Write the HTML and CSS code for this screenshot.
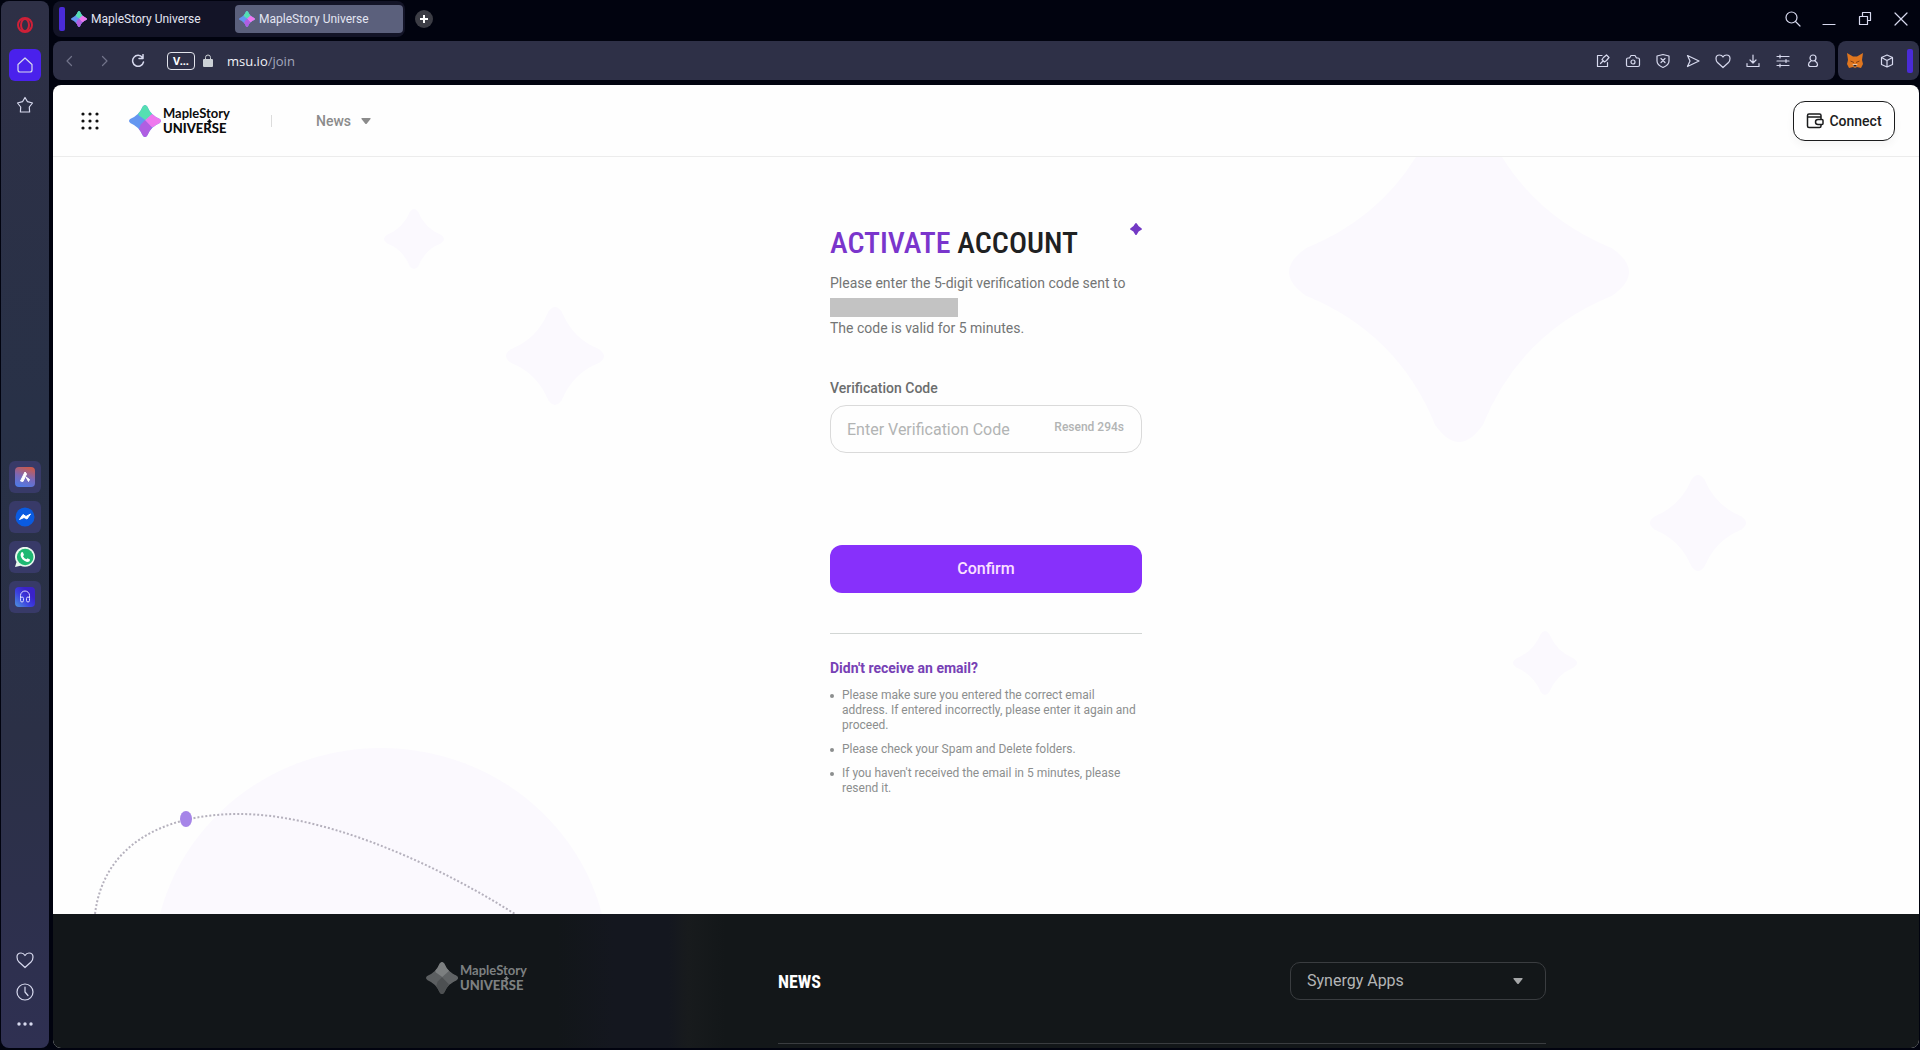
FILE: index.html
```html
<!DOCTYPE html>
<html lang="en">
<head>
    <meta charset="UTF-8">
    <meta name="viewport" content="width=device-width, initial-scale=1.0">
    <title>MapleStory Universe</title>
    <link rel="stylesheet" href="styles.css">
</head>
<body>
    <!-- shared shapes -->
    <svg class="defs" width="0" height="0" aria-hidden="true">
        <symbol id="star" viewBox="0 0 100 100">
            <path d="M43 5Q50 -5 57 5Q68 32 95 43Q105 50 95 57Q68 68 57 95Q50 105 43 95Q32 68 5 57Q-5 50 5 43Q32 32 43 5Z"/>
        </symbol>
        <clipPath id="star-clip">
            <path d="M43 5Q50 -5 57 5Q68 32 95 43Q105 50 95 57Q68 68 57 95Q50 105 43 95Q32 68 5 57Q-5 50 5 43Q32 32 43 5Z"/>
        </clipPath>
        <symbol id="logo-color" viewBox="0 0 100 100">
            <g clip-path="url(#star-clip)">
                <rect width="100" height="100" fill="#6496f0"/>
                <path d="M25 0H80L70 34L52 48L30 32Z" fill="#55dfb2"/>
                <path d="M70 30L100 20V75L68 68L50 48Z" fill="#ee78ee"/>
                <path d="M50 48L70 68L80 100H25L36 62Z" fill="#b05ee2"/>
            </g>
        </symbol>
        <symbol id="logo-gray" viewBox="0 0 100 100">
            <g clip-path="url(#star-clip)">
                <rect width="100" height="100" fill="#5c5f61"/>
                <path d="M25 0H80L70 34L52 48L30 32Z" fill="#7c7f80"/>
                <path d="M70 30L100 20V75L68 68L50 48Z" fill="#606365"/>
                <path d="M50 48L70 68L80 100H25L36 62Z" fill="#4d5052"/>
            </g>
        </symbol>
    </svg>

    <nav class="sidebar">
        <div class="side-group">
            <button class="side-btn" aria-label="Opera">
                <svg width="18" height="18" viewBox="0 0 18 18" fill="none" stroke="#cf2038"><circle cx="9" cy="9" r="7" stroke-width="2"/><ellipse cx="9" cy="9" rx="4" ry="6" stroke-width="2"/></svg>
            </button>
            <button class="side-btn home" aria-label="Home">
                <svg class="line" width="18" height="18" viewBox="0 0 18 18"><path d="M2 8.500L9 2L16 8.500V14Q16 16 14 16H4Q2 16 2 14Z"/></svg>
            </button>
            <button class="side-btn" aria-label="Bookmarks">
                <svg class="line" width="18" height="18" viewBox="0 0 18 18"><path d="M9 1.500L11.500 5.700L16.500 7L13.300 11L13.600 16H4.400L4.700 11L1.500 7L6.500 5.700Z"/></svg>
            </button>
        </div>
        <div class="side-group apps">
            <button class="side-btn app" aria-label="Aria">
                <svg width="20" height="20" viewBox="0 0 20 20">
                    <defs><linearGradient id="aria" x1="0.600" y1="0" x2="0.300" y2="1"><stop offset="0" stop-color="#c75a50"/><stop offset="0.500" stop-color="#7a68b8"/><stop offset="1" stop-color="#4f7ae6"/></linearGradient></defs>
                    <rect width="20" height="20" rx="4" fill="url(#aria)"/>
                    <path d="M5.500 14L10 5L11.500 7L8 14.500ZM11 10L14.500 12.500L13.500 14.500Z" fill="#fff" stroke="#fff" stroke-linejoin="round"/>
                </svg>
            </button>
            <button class="side-btn app" aria-label="Messenger">
                <svg width="20" height="20" viewBox="0 0 20 20"><circle cx="10" cy="10" r="9.500" fill="#0a5be0"/><path d="M4.500 12.500L8 7.500L11 9.500L15.500 7L12 12L9 10.500Z" fill="#fff" stroke="#fff" stroke-linejoin="round"/></svg>
            </button>
            <button class="side-btn app" aria-label="WhatsApp">
                <svg width="20" height="20" viewBox="0 0 20 20"><path d="M0 20L1.500 15A10 10 0 1 1 5.500 18.700Z" fill="#e8f8ee"/><circle cx="10.200" cy="10" r="8.300" fill="#1fb873"/><path d="M6 6Q7 4.500 8 5.500L9 8L8 9.200Q9.200 11.500 11.500 12.300L12.500 11.200L15 12.500Q15 15 12 15Q6 13 5.500 8Z" fill="#fff"/></svg>
            </button>
            <button class="side-btn app" aria-label="Player">
                <svg width="20" height="20" viewBox="0 0 20 20">
                    <defs><linearGradient id="player" x1="0" y1="1" x2="0.700" y2="0.300"><stop offset="0" stop-color="#4f95dd"/><stop offset="0.600" stop-color="#3b3fe0"/><stop offset="1" stop-color="#3a22c9"/></linearGradient></defs>
                    <rect width="20" height="20" rx="4" fill="url(#player)"/>
                    <path d="M5.500 11V8.500A4.500 4.500 0 0 1 14.500 8.500V11" fill="none" stroke="#d9d8ff"/>
                    <rect x="5.500" y="10" width="3" height="5" rx="1.500" fill="none" stroke="#d9d8ff"/>
                    <rect x="11.500" y="10" width="3" height="5" rx="1.500" fill="none" stroke="#d9d8ff"/>
                </svg>
            </button>
        </div>
        <div class="side-group bottom">
            <button class="side-btn" aria-label="Favorites">
                <svg class="line" width="18" height="18" viewBox="0 0 18 18"><path d="M9 16.500L3 11Q1 9 1 6Q1 2 5 2Q7.500 2 9 4.500Q10.500 2 13 2Q17 2 17 6Q17 9 15 11Z"/></svg>
            </button>
            <button class="side-btn" aria-label="History">
                <svg class="line" width="18" height="18" viewBox="0 0 18 18"><circle cx="9" cy="9" r="8"/><path d="M9 4V9L12 12.500"/></svg>
            </button>
            <button class="side-btn" aria-label="More">
                <svg width="18" height="18" viewBox="0 0 18 18" fill="#d7d9ee"><circle cx="3" cy="9" r="1.700"/><circle cx="9" cy="9" r="1.700"/><circle cx="15" cy="9" r="1.700"/></svg>
            </button>
        </div>
    </nav>

    <div class="window">
        <div class="tabbar">
            <div class="tabs">
                <span class="island"></span>
                <a class="tab" href="#"><svg width="16" height="16"><use href="#logo-color"/></svg>MapleStory Universe</a>
                <a class="tab active" href="#"><svg width="16" height="16"><use href="#logo-color"/></svg>MapleStory Universe</a>
            </div>
            <button class="new-tab" aria-label="New tab"><svg width="8" height="8" viewBox="0 0 8 8"><path d="M4 0V8M0 4H8" stroke="#fff" stroke-width="2"/></svg></button>
            <div class="win-controls">
                <button aria-label="Search"><svg class="line" width="16" height="16" viewBox="0 0 16 16"><circle cx="6.500" cy="6.500" r="5.500"/><path d="M10.500 10.500L15 15"/></svg></button>
                <button aria-label="Minimize"><svg class="line" width="16" height="16" viewBox="0 0 16 16"><path d="M2 13.500H14"/></svg></button>
                <button aria-label="Restore"><svg class="line" width="16" height="16" viewBox="0 0 16 16"><path d="M2.500 5.500H10.500V13.500H2.500ZM5.500 5.500V1.500H13.500V9.500H10.500"/></svg></button>
                <button aria-label="Close"><svg class="line" width="16" height="16" viewBox="0 0 16 16"><path d="M2 2L14 14M14 2L2 14"/></svg></button>
            </div>
        </div>

        <div class="toolbar">
            <div class="address">
                <button class="nav-btn off" aria-label="Back"><svg class="line" width="14" height="14" viewBox="0 0 14 14"><path d="M8.500 2.500L4 7L8.500 11.500"/></svg></button>
                <button class="nav-btn off" aria-label="Forward"><svg class="line" width="14" height="14" viewBox="0 0 14 14"><path d="M5.500 2.500L10 7L5.500 11.500"/></svg></button>
                <button class="nav-btn" aria-label="Reload"><svg class="line bold" width="14" height="14" viewBox="0 0 14 14"><path d="M11.500 3.500A5.500 5.500 0 1 0 12.500 8M12 0.500V4.500H8"/></svg></button>
                <button class="vpn">V...</button>
                <svg class="lock" width="10" height="14" viewBox="0 0 10 14"><path d="M2.500 6V3.500A2.500 2.500 0 0 1 7.500 3.500V6" fill="none" stroke="#ccd1d6"/><rect y="5" width="10" height="8" rx="1" fill="#ccd1d6"/></svg>
                <span class="url">msu.io<span>/join</span></span>
                <div class="tools">
                    <button aria-label="Edit page"><svg class="line" width="16" height="16" viewBox="0 0 16 16"><path d="M7 2.500H2.500V13.500H12.500V9.500M5.500 10.500L8 8M7 6.500L9.500 9L11.500 7.500L14 4.500L11.500 2L8.500 4.500Z"/></svg></button>
                    <button aria-label="Snapshot"><svg class="line" width="16" height="16" viewBox="0 0 16 16"><path d="M3 5H4.500L6 2.500H10L11.500 5H13Q14.500 5 14.500 6.500V12Q14.500 13.500 13 13.500H3Q1.500 13.500 1.500 12V6.500Q1.500 5 3 5Z"/><circle cx="8" cy="9" r="2"/></svg></button>
                    <button aria-label="Ad blocker"><svg class="line" width="16" height="16" viewBox="0 0 16 16"><path d="M8 1.500L14 3V8Q14 12 8 14.500Q2 12 2 8V3ZM6 5.500L10 9.500M10 5.500L6 9.500"/></svg></button>
                    <button aria-label="Send"><svg class="line" width="16" height="16" viewBox="0 0 16 16"><path d="M2.500 2.500L14 8L2.500 13.500L5 8Z"/></svg></button>
                    <button aria-label="Add to favorites"><svg class="line" width="16" height="16" viewBox="0 0 16 16"><path d="M8 14.500L2.500 9.500Q1 8 1 5.500Q1 2 4.500 2Q7 2 8 4Q9 2 11.500 2Q15 2 15 5.500Q15 8 13.500 9.500Z"/></svg></button>
                    <button aria-label="Downloads"><svg class="line" width="16" height="16" viewBox="0 0 16 16"><path d="M8 2V10M5 7L8 10L11 7M2 10.500V13.500H14V10.500"/></svg></button>
                    <button aria-label="Easy setup"><svg class="line" width="16" height="16" viewBox="0 0 16 16"><path d="M2 3.500H14M2 8H14M2 12.500H14M5 2V5M11 6.500V9.500M5 11V14"/></svg></button>
                    <button aria-label="Profile"><svg class="line" width="16" height="16" viewBox="0 0 16 16"><circle cx="8" cy="5" r="3"/><path d="M6 8Q3.500 9.500 3.500 11.500Q3.500 13.500 5.500 13.500H10.500Q12.500 13.500 12.500 11.500Q12.500 9.500 10 8"/></svg></button>
                </div>
            </div>
            <div class="extensions">
                <button aria-label="MetaMask"><svg width="16" height="16" viewBox="0 0 16 16"><path d="M0 0L6 3.500H10L16 0L15 7L16 11L14 15L10 14L8 15L6 14L2 15L0 11L1 7Z" fill="#e0761f"/><path d="M3.500 8L7 9.500M12.500 8L9 9.500" stroke="#7a3b17"/><path d="M5.500 11H10.500L9.500 13.500H6.500Z" fill="#e5c4ab"/><path d="M6.500 12H9.500V13.500H6.500Z" fill="#30201b"/></svg></button>
                <button aria-label="Extensions"><svg class="line" width="16" height="16" viewBox="0 0 16 16"><path d="M8 2L13.500 4.500V11.500L8 14L2.500 11.500V4.500ZM2.500 4.500L8 7.500L13.500 4.500M8 7.500V14"/></svg></button>
                <span class="island"></span>
            </div>
        </div>

        <div class="page">
            <header class="header">
                <button class="menu" aria-label="Menu">
                    <svg width="18" height="18" viewBox="0 0 18 18" fill="#111"><circle cx="2" cy="2" r="1.600"/><circle cx="9" cy="2" r="1.600"/><circle cx="16" cy="2" r="1.600"/><circle cx="2" cy="9" r="1.600"/><circle cx="9" cy="9" r="1.600"/><circle cx="16" cy="9" r="1.600"/><circle cx="2" cy="16" r="1.600"/><circle cx="9" cy="16" r="1.600"/><circle cx="16" cy="16" r="1.600"/></svg>
                </button>
                <a class="logo" href="#">
                    <svg width="32" height="32"><use href="#logo-color"/></svg>
                    <span class="logo-text"><span>MapleStory</span><b>UNIVERSE</b><svg class="spark" width="5" height="5"><use href="#star"/></svg></span>
                </a>
                <span class="divider"></span>
                <button class="news">News <svg width="10" height="6" viewBox="0 0 10 6"><path d="M1 0H9Q10 0 9.500 1L5.500 6H4.500L0.500 1Q0 0 1 0Z" fill="#8b8b8b"/></svg></button>
                <button class="connect">
                    <svg width="18" height="18" viewBox="0 0 18 18" fill="none" stroke="#1b1c1d" stroke-width="1.500"><path d="M15 7V3.500Q15 2 13.500 2H3Q1.500 2 1.500 3.500V14Q1.500 15.500 3 15.500H13.500Q15 15.500 15 14V12.500M1.500 5H15M16 7.500H12A2.500 2.500 0 0 0 12 12.500H16Q17 12.500 17 11.500V8.500Q17 7.500 16 7.500Z"/></svg>
                    Connect
                </button>
            </header>

            <main class="main">
                <div class="shapes" aria-hidden="true">
                    <svg class="shape s1"><use href="#star"/></svg>
                    <svg class="shape s2"><use href="#star"/></svg>
                    <svg class="shape s3"><use href="#star"/></svg>
                    <svg class="shape s4"><use href="#star"/></svg>
                    <svg class="shape s5"><use href="#star"/></svg>
                    <svg class="orbit" width="560" height="170" viewBox="0 0 560 170">
                        <ellipse cx="328" cy="224" rx="228" ry="220" fill="#fbf9fe"/>
                        <path d="M42 170C50 104 106 70 186 70C264 70 368 111 462 170" fill="none" stroke="#b5b1bd" stroke-width="2" stroke-dasharray="2 2"/>
                        <ellipse cx="133" cy="75" rx="6" ry="8" fill="#a685e8"/>
                    </svg>
                </div>

                <form class="form">
                    <svg class="sparkle" width="12" height="12"><use href="#star"/></svg>
                    <h1><em>ACTIVATE</em> ACCOUNT</h1>
                    <p class="intro">Please enter the 5-digit verification code sent to<span class="masked"></span>The code is valid for 5 minutes.</p>
                    <label for="code">Verification Code</label>
                    <div class="field">
                        <input type="text" id="code" placeholder="Enter Verification Code">
                        <button type="button" class="resend">Resend 294s</button>
                    </div>
                    <button type="button" class="confirm">Confirm</button>
                    <section class="help">
                        <h2>Didn't receive an email?</h2>
                        <ul>
                            <li>Please make sure you entered the correct email address. If entered incorrectly, please enter it again and proceed.</li>
                            <li>Please check your Spam and Delete folders.</li>
                            <li>If you haven't received the email in 5 minutes, please resend it.</li>
                        </ul>
                    </section>
                </form>
            </main>

            <footer class="footer">
                <a class="logo gray" href="#">
                    <svg width="32" height="32"><use href="#logo-gray"/></svg>
                    <span class="logo-text"><span>MapleStory</span><b>UNIVERSE</b><svg class="spark" width="5" height="5"><use href="#star"/></svg></span>
                </a>
                <div class="footer-main">
                    <h2>NEWS</h2>
                    <div class="select-wrap">
                        <select aria-label="Synergy Apps"><option>Synergy Apps</option></select>
                        <svg width="10" height="6" viewBox="0 0 10 6"><path d="M1 0H9Q10 0 9.500 1L5.500 6H4.500L0.500 1Q0 0 1 0Z" fill="#a5a7a8"/></svg>
                    </div>
                </div>
            </footer>
        </div>
    </div>
</body>
</html>
```
FILE: styles.css
```css
* {
    box-sizing: border-box;
}
body {
    margin: 0;
    height: 100vh;
    display: flex;
    gap: 4px;
    padding: 1px 1px 2px;
    overflow: hidden;
    background-color: #01030f;
    font-family: Roboto, "Liberation Sans", sans-serif;
}
button {
    padding: 0;
    border: none;
    background: none;
    font-family: inherit;
    cursor: pointer;
}
a {
    color: inherit;
    text-decoration: none;
}
svg {
    display: block;
    flex-shrink: 0;
}
.defs {
    position: absolute;
}
.line {
    fill: none;
    stroke: #d7d9ee;
    stroke-width: 1.2;
    stroke-linecap: round;
    stroke-linejoin: round;
}
.line.bold {
    stroke-width: 1.5;
}

/* browser side panel */
.sidebar {
    width: 48px;
    flex-shrink: 0;
    padding: 8px 0;
    display: flex;
    flex-direction: column;
    background: linear-gradient(#2e3046, #283147 40%, #2b3046 70%, #2f3052);
    border-radius: 8px;
}
.side-group {
    flex: 1;
    display: flex;
    flex-direction: column;
    align-items: center;
    gap: 8px;
}
.side-group.apps {
    justify-content: center;
    padding-top: 24px;
}
.side-group.bottom {
    justify-content: flex-end;
    gap: 0;
}
.side-btn {
    width: 32px;
    height: 32px;
    display: flex;
    align-items: center;
    justify-content: center;
    border-radius: 6px;
}
.side-btn.home {
    background-color: #4a21ec;
}
.side-btn.app {
    background-color: #383a68;
}

/* browser top */
.window {
    flex: 1;
    min-width: 0;
    display: flex;
    flex-direction: column;
}
.tabbar {
    height: 40px;
    flex-shrink: 0;
    display: flex;
    align-items: center;
    padding-bottom: 4px;
}
.tabs {
    height: 36px;
    display: flex;
    align-items: center;
    padding: 0 2px 0 6px;
    background-color: #131427;
    border-radius: 8px;
}
.island {
    width: 6px;
    height: 24px;
    background-color: #4a2bd8;
    border-radius: 2px;
}
.tab {
    width: 170px;
    height: 28px;
    display: flex;
    align-items: center;
    gap: 4px;
    padding-left: 6px;
    border-radius: 4px;
    color: #e3e5f2;
    font-size: 12px;
}
.tab.active {
    width: 168px;
    padding-left: 4px;
    background-color: #5b607c;
}
.new-tab {
    width: 18px;
    height: 18px;
    margin-left: 10px;
    display: flex;
    align-items: center;
    justify-content: center;
    background-color: #3c3d45;
    border-radius: 50%;
}
.win-controls {
    margin-left: auto;
    padding-right: 10px;
    display: flex;
    gap: 20px;
}
.toolbar {
    height: 39px;
    flex-shrink: 0;
    display: flex;
    gap: 3px;
}
.address,
.extensions {
    display: flex;
    align-items: center;
    background-color: #2e3047;
    border-radius: 8px;
}
.address {
    flex: 1;
    padding: 0 14px 0 10px;
}
.nav-btn {
    margin-right: 22px;
}
.nav-btn.off {
    opacity: 0.4;
    margin-right: 20px;
}
.vpn {
    width: 28px;
    height: 18px;
    border: 1px solid #e2e4ec;
    border-radius: 4px;
    color: #fff;
    font: bold 11px "Noto Sans", sans-serif;
    line-height: 14px;
}
.lock {
    margin: 0 14px 0 8px;
}
.url {
    color: #f2f3f8;
    font: 13px "Open Sans", "Noto Sans", sans-serif;
}
.url span {
    color: #a5a8bd;
}
.tools {
    margin-left: auto;
    display: flex;
    gap: 14px;
}
.extensions {
    width: 81px;
    padding: 0 5px 0 9px;
    gap: 16px;
}
.extensions .island {
    margin-left: -4px;
}

/* page */
.page {
    flex: 1;
    min-height: 0;
    margin-top: 5px;
    display: flex;
    flex-direction: column;
    overflow: hidden;
    background-color: #fefefe;
    border-radius: 8px;
}
.header {
    height: 72px;
    flex-shrink: 0;
    display: flex;
    align-items: center;
    padding: 0 24px 0 28px;
    border-bottom: 1px solid #ececec;
}
.logo {
    display: flex;
    align-items: center;
    gap: 2px;
    color: #0c0c0c;
}
.logo-text {
    position: relative;
    display: flex;
    flex-direction: column;
    font-family: Lato, sans-serif;
    font-size: 13px;
    font-weight: 700;
    line-height: 15px;
}
.logo-text b {
    font-weight: 900;
}
/* small sparkle over the R */
.spark {
    position: absolute;
    left: 44px;
    top: 13px;
    fill: currentColor;
}
.header .logo {
    width: 100px;
    margin-left: 30px;
}
.divider {
    width: 1px;
    height: 12px;
    margin: 0 44px 0 42px;
    background-color: #dcdcdc;
}
.news {
    display: flex;
    align-items: center;
    gap: 10px;
    color: #8b8b8b;
    font-size: 14px;
    font-weight: 500;
}
.connect {
    width: 102px;
    height: 40px;
    margin-left: auto;
    display: flex;
    align-items: center;
    justify-content: center;
    gap: 5px;
    border: 1px solid #1b1c1d;
    border-radius: 12px;
    background-color: #fff;
    box-shadow: 0 4px 8px rgba(0, 0, 0, 0.04);
    color: #1b1c1d;
    font-size: 14px;
    font-weight: 500;
}
.main {
    position: relative;
    flex: 1;
    padding: 64px 0;
    overflow: hidden;
}

/* background decoration */
.shape {
    position: absolute;
    fill: #fbf9fe;
}
.s1 { width: 340px; height: 350px; right: 290px; top: -60px; }
.s2 { width: 104px; height: 96px; right: 169px; top: 318px; }
.s3 { width: 64px; height: 64px; right: 342px; top: 474px; }
.s4 { width: 68px; height: 60px; left: 327px; top: 52px; }
.s5 { width: 98px; height: 114px; left: 453px; top: 142px; }
.orbit {
    position: absolute;
    left: 0;
    bottom: 0;
}
.form {
    position: relative;
    width: 312px;
    margin: 0 auto;
}
.sparkle {
    position: absolute;
    top: 2px;
    right: 0;
    fill: #7339c4;
}
h1 {
    margin: 0 0 7px;
    color: #1f2122;
    font-family: "Roboto Condensed", "Liberation Sans Narrow", Roboto, sans-serif;
    font-size: 30px;
    font-weight: 500;
    line-height: 44px;
    white-space: nowrap;
}
h1 em {
    color: #7a35cc;
    font-style: normal;
}
.intro {
    margin: 0;
    color: #737575;
    font-size: 14px;
    line-height: 22px;
    white-space: nowrap;
}
.masked {
    display: block;
    width: 128px;
    height: 19px;
    margin-top: 4px;
    background-color: #c3c3c3;
}
.form label {
    display: block;
    margin: 38px 0 6px;
    color: #6b6d6d;
    font-size: 14px;
    font-weight: 500;
    line-height: 22px;
}
.field {
    height: 48px;
    display: flex;
    align-items: center;
    padding: 0 17px 0 16px;
    border: 1px solid #dadada;
    border-radius: 16px;
}
.field input {
    flex: 1;
    min-width: 0;
    padding: 0;
    border: none;
    outline: none;
    background: none;
    font: 16px Roboto, sans-serif;
}
.field input::placeholder {
    color: #b2b4b4;
}
.resend {
    padding-bottom: 4px;
    color: #b2b4b4;
    font-size: 12px;
    font-weight: 500;
}
.confirm {
    display: block;
    width: 100%;
    height: 48px;
    margin-top: 92px;
    padding-bottom: 2px;
    background-color: #8730fb;
    border-radius: 12px;
    color: #fbe0ff;
    font-size: 16px;
    font-weight: 500;
}
.help {
    margin-top: 40px;
    padding-top: 23px;
    border-top: 1px solid #d2d6d4;
}
.help h2 {
    margin: 0 0 9px;
    color: #7741b5;
    font-size: 14px;
    font-weight: 700;
    line-height: 22px;
}
.help ul {
    margin: 0;
    padding: 0;
    display: flex;
    flex-direction: column;
    gap: 9px;
    list-style: none;
}
.help li {
    display: flex;
    gap: 8px;
    color: #8c8e8e;
    font-size: 12px;
    line-height: 15px;
}
.help li::before {
    content: "";
    width: 4px;
    height: 4px;
    margin-top: 6px;
    flex-shrink: 0;
    background-color: #8c8e8e;
    border-radius: 50%;
}

/* footer */
.footer {
    height: 134px;
    flex-shrink: 0;
    display: flex;
    justify-content: center;
    align-items: flex-start;
    gap: 252px;
    padding-top: 48px;
    background: linear-gradient(90deg, #121619 27%, #14171f 30%, #14171f 33%, #181b1d 34%, #131719 36%);
}
.logo.gray {
    width: 100px;
    color: #7d8081;
}
.footer-main {
    width: 768px;
    height: 82px;
    display: flex;
    align-items: flex-start;
    justify-content: space-between;
    border-bottom: 1px solid #3a3d40;
}
.footer h2 {
    margin: 0;
    color: #fff;
    font-family: "Roboto Condensed", "Liberation Sans Narrow", Roboto, sans-serif;
    font-size: 18px;
    line-height: 40px;
}
.select-wrap {
    display: flex;
    align-items: center;
    width: 256px;
    height: 38px;
    padding-right: 22px;
    border: 1px solid #3a3d40;
    border-radius: 10px;
}
.select-wrap select {
    flex: 1;
    height: 100%;
    padding: 0 16px 2px;
    appearance: none;
    border: none;
    background: none;
    color: #b3b5b6;
    font: 16px Roboto, sans-serif;
}
```
